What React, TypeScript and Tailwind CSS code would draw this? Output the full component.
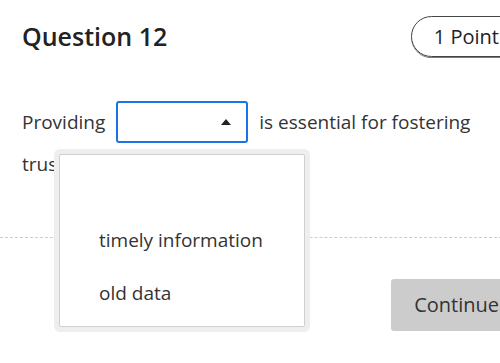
import React from "react";

export default function App() {
  return (
    <div className="relative w-[500px] h-[363px] overflow-hidden bg-white text-[#333]" style={{ fontFamily: '"Open Sans", "Noto Sans", sans-serif' }}>
      <div className="w-[522px] pl-[22px] pt-[16px]">
        <div className="flex items-center justify-between h-[41px]">
          <h1 className="text-[25px] font-semibold text-[#222] leading-none -mt-[1px]">Question 12</h1>
          <div className="h-[41px] flex items-center px-[22px] rounded-full border border-[#444] shadow-[0_1px_0_#777] text-[20px] text-[#222]">
            1 Point
          </div>
        </div>

        <div className="mt-[44px] flex items-center text-[19px] leading-[28px]">
          <span>Providing</span>
          <div className="ml-[11px] w-[132px] h-[42px] rounded-[3px] border-2 border-[#1a73e8] flex items-center justify-end pr-[15px]">
            <svg width="10" height="6" viewBox="0 0 10 6"><path d="M0 6 L5 0 L10 6 Z" fill="#222" /></svg>
          </div>
          <span className="ml-[11px]">is essential for fostering</span>
        </div>
        <div className="mt-[7px] text-[19px] leading-[28px]">trust.</div>

        <div className="mt-[59px] -ml-[22px] border-t border-dashed border-[#ccc]" />

        <div className="mt-[41px] flex justify-end">
          <button className="h-[52px] px-[23px] rounded-[3px] bg-[#cccccc] text-[20px] text-[#333]">Continue</button>
        </div>
      </div>

      <div className="absolute left-[54px] top-[149px] w-[256px] h-[183px] rounded-[6px] bg-[#eeeeee] p-[5px]">
        <div className="h-full bg-white border border-[#cfcfcf] rounded-[2px] py-[6px] text-[19px] text-[#333]">
          <div className="h-[53px]" />
          <div className="h-[53px] flex items-center pl-[39px]">timely information</div>
          <div className="h-[53px] flex items-center pl-[39px]">old data</div>
        </div>
      </div>
    </div>
  );
}
